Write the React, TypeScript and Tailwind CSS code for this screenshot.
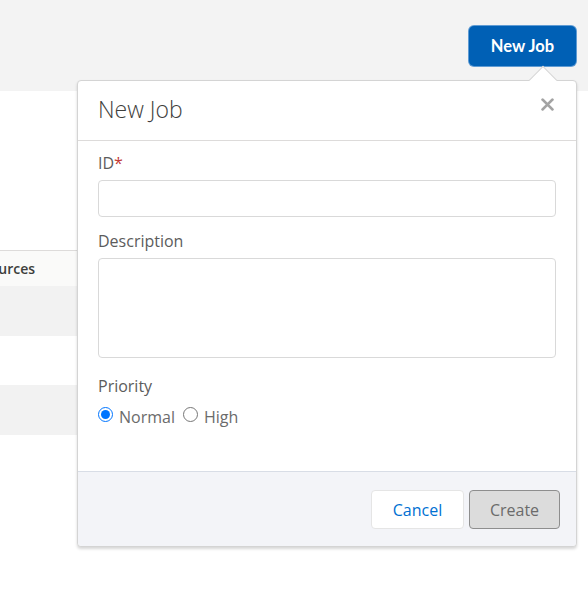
import React, { useState } from 'react';

const App: React.FC = () => {
  const [priority, setPriority] = useState<'normal' | 'high'>('normal');

  return (
    <div className="relative min-h-[611px] bg-white font-['Open_Sans',sans-serif] overflow-hidden">
      {/* Page header band */}
      <div className="h-[91px] bg-[#f3f3f3] flex justify-end items-start pt-[26px] pr-[12px]">
        <button className="h-[40px] w-[107px] rounded-[5px] bg-[#0060b5] text-white font-['Lato',sans-serif] font-bold text-[16.5px] shadow-[0_0_0_1px_#5f9bd3]">
          New Job
        </button>
      </div>

      {/* Table behind the popover */}
      <div className="mt-[159px] w-[560px]">
        <div className="h-[36px] border-t border-[#dddbda] bg-[#fafaf9] flex items-center">
          <span className="-ml-[34px] font-semibold text-[14px] text-[#3e3e3c] whitespace-nowrap">Resources</span>
        </div>
        <div className="h-[50px] bg-[#f2f2f2]"></div>
        <div className="h-[49px] bg-white"></div>
        <div className="h-[50px] bg-[#f2f2f2]"></div>
      </div>

      {/* Popover */}
      <div className="absolute left-[77px] top-[80px] w-[500px] bg-white border border-[#d4d4d4] rounded-[4px] shadow-[0_2px_3px_rgba(0,0,0,0.16)]">
        <div className="absolute -top-[11px] right-[23px] w-[20px] h-[20px] bg-white border-l border-t border-[#d4d4d4] rotate-45"></div>

        <div className="relative h-[60px] border-b border-[#dddbda] flex items-center justify-between pl-[20px] pr-[22px]">
          <h2 className="text-[23px] font-light text-[#3e3e3c] -mt-[2px]">New Job</h2>
          <button className="w-[13px] h-[13px] -mt-[13px] text-[#a3a3a3]">
            <svg viewBox="0 0 12 12" className="w-[13px] h-[13px]" fill="none" stroke="currentColor" strokeWidth="2.6" strokeLinecap="round">
              <path d="M1.5 1.5l9 9M10.5 1.5l-9 9" />
            </svg>
          </button>
        </div>

        <div className="px-[20px] pt-[10px] pb-[42px] text-[16px] leading-[24px]">
          <label className="block text-[#5c5c5c]">
            ID<span className="text-[#c23934]">*</span>
          </label>
          <input className="mt-[5px] block w-full h-[37px] border border-[#d9d9d9] rounded-[4px] px-3 outline-none" />

          <label className="block mt-[12px] text-[#5c5c5c]">Description</label>
          <textarea className="mt-[5px] block w-full h-[100px] border border-[#d9d9d9] rounded-[4px] px-3 py-2 outline-none resize-none" />

          <label className="block mt-[16px] text-[#5c5c5c]">Priority</label>
          <div className="mt-[7px] flex items-center text-[#6b6b6b]">
            <input
              type="radio"
              name="priority"
              checked={priority === 'normal'}
              onChange={() => setPriority('normal')}
              className="w-[15px] h-[15px] m-0 -mt-[6px]"
            />
            <span className="ml-[6px]">Normal</span>
            <input
              type="radio"
              name="priority"
              checked={priority === 'high'}
              onChange={() => setPriority('high')}
              className="w-[15px] h-[15px] m-0 ml-[8px] -mt-[6px]"
            />
            <span className="ml-[6px]">High</span>
          </div>
        </div>

        <div className="border-t border-[#d8dde6] bg-[#f3f4f8] rounded-b-[4px] flex justify-end gap-[5px] pt-[18px] pb-[17px] pr-[16px]">
          <button className="h-[39px] w-[93px] rounded-[4px] bg-white border border-[#e5e5e5] text-[16px] text-[#0070d2]">
            Cancel
          </button>
          <button className="h-[39px] w-[91px] rounded-[4px] bg-[#dcdcdc] border border-[#8e8e8e] text-[16px] text-[#6b6b6b]">
            Create
          </button>
        </div>
      </div>
    </div>
  );
};

export default App;
